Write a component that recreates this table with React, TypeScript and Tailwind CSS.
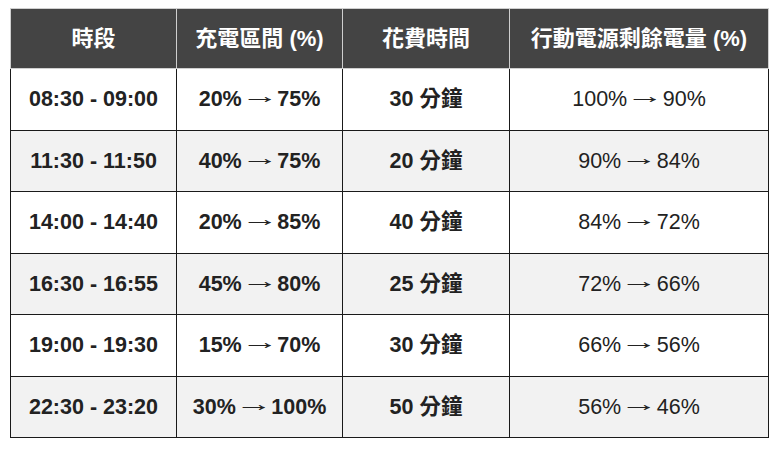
import React from "react";

const rows = [
  ["08:30 - 09:00", "20%", "75%", "30 分鐘", "100%", "90%"],
  ["11:30 - 11:50", "40%", "75%", "20 分鐘", "90%", "84%"],
  ["14:00 - 14:40", "20%", "85%", "40 分鐘", "84%", "72%"],
  ["16:30 - 16:55", "45%", "80%", "25 分鐘", "72%", "66%"],
  ["19:00 - 19:30", "15%", "70%", "30 分鐘", "66%", "56%"],
  ["22:30 - 23:20", "30%", "100%", "50 分鐘", "56%", "46%"],
];

const headers = ["時段", "充電區間 (%)", "花費時間", "行動電源剩餘電量 (%)"];

function Range({ from, to }: { from: string; to: string }) {
  return (
    <>
      {from}
      <span className="inline-block mx-[7px] scale-x-[1.75] -translate-y-[3px] font-normal">→</span>
      {to}
    </>
  );
}

export default function App() {
  return (
    <div
      className="w-[780px] h-[452px] bg-white pt-2 pl-[10px] pr-[11px]"
      style={{ fontFamily: '"Liberation Sans", "Noto Sans CJK TC", sans-serif' }}
    >
      <table className="w-full border-collapse text-center text-[#222]">
        <colgroup>
          <col className="w-[166px]" />
          <col className="w-[166px]" />
          <col className="w-[167px]" />
          <col />
        </colgroup>
        <thead>
          <tr className="bg-[#444444]">
            {headers.map((h) => (
              <th
                key={h}
                className="h-[60px] border border-[#cfcfcf] text-white font-bold text-[22px] p-0"
              >
                {h}
              </th>
            ))}
          </tr>
        </thead>
        <tbody>
          {rows.map((r, i) => (
            <tr key={i} className={i % 2 === 1 ? "bg-[#f2f2f2]" : "bg-white"}>
              <td className="h-[61.5px] border-[1.5px] border-[#1a1a1a] text-[21.5px] p-0 font-bold">
                {r[0]}
              </td>
              <td className="h-[61.5px] border-[1.5px] border-[#1a1a1a] text-[21.5px] p-0 font-bold">
                <Range from={r[1]} to={r[2]} />
              </td>
              <td className="h-[61.5px] border-[1.5px] border-[#1a1a1a] text-[21.5px] p-0 font-bold">
                {r[3]}
              </td>
              <td className="h-[61.5px] border-[1.5px] border-[#1a1a1a] text-[21.5px] p-0 font-normal">
                <Range from={r[4]} to={r[5]} />
              </td>
            </tr>
          ))}
        </tbody>
      </table>
    </div>
  );
}
